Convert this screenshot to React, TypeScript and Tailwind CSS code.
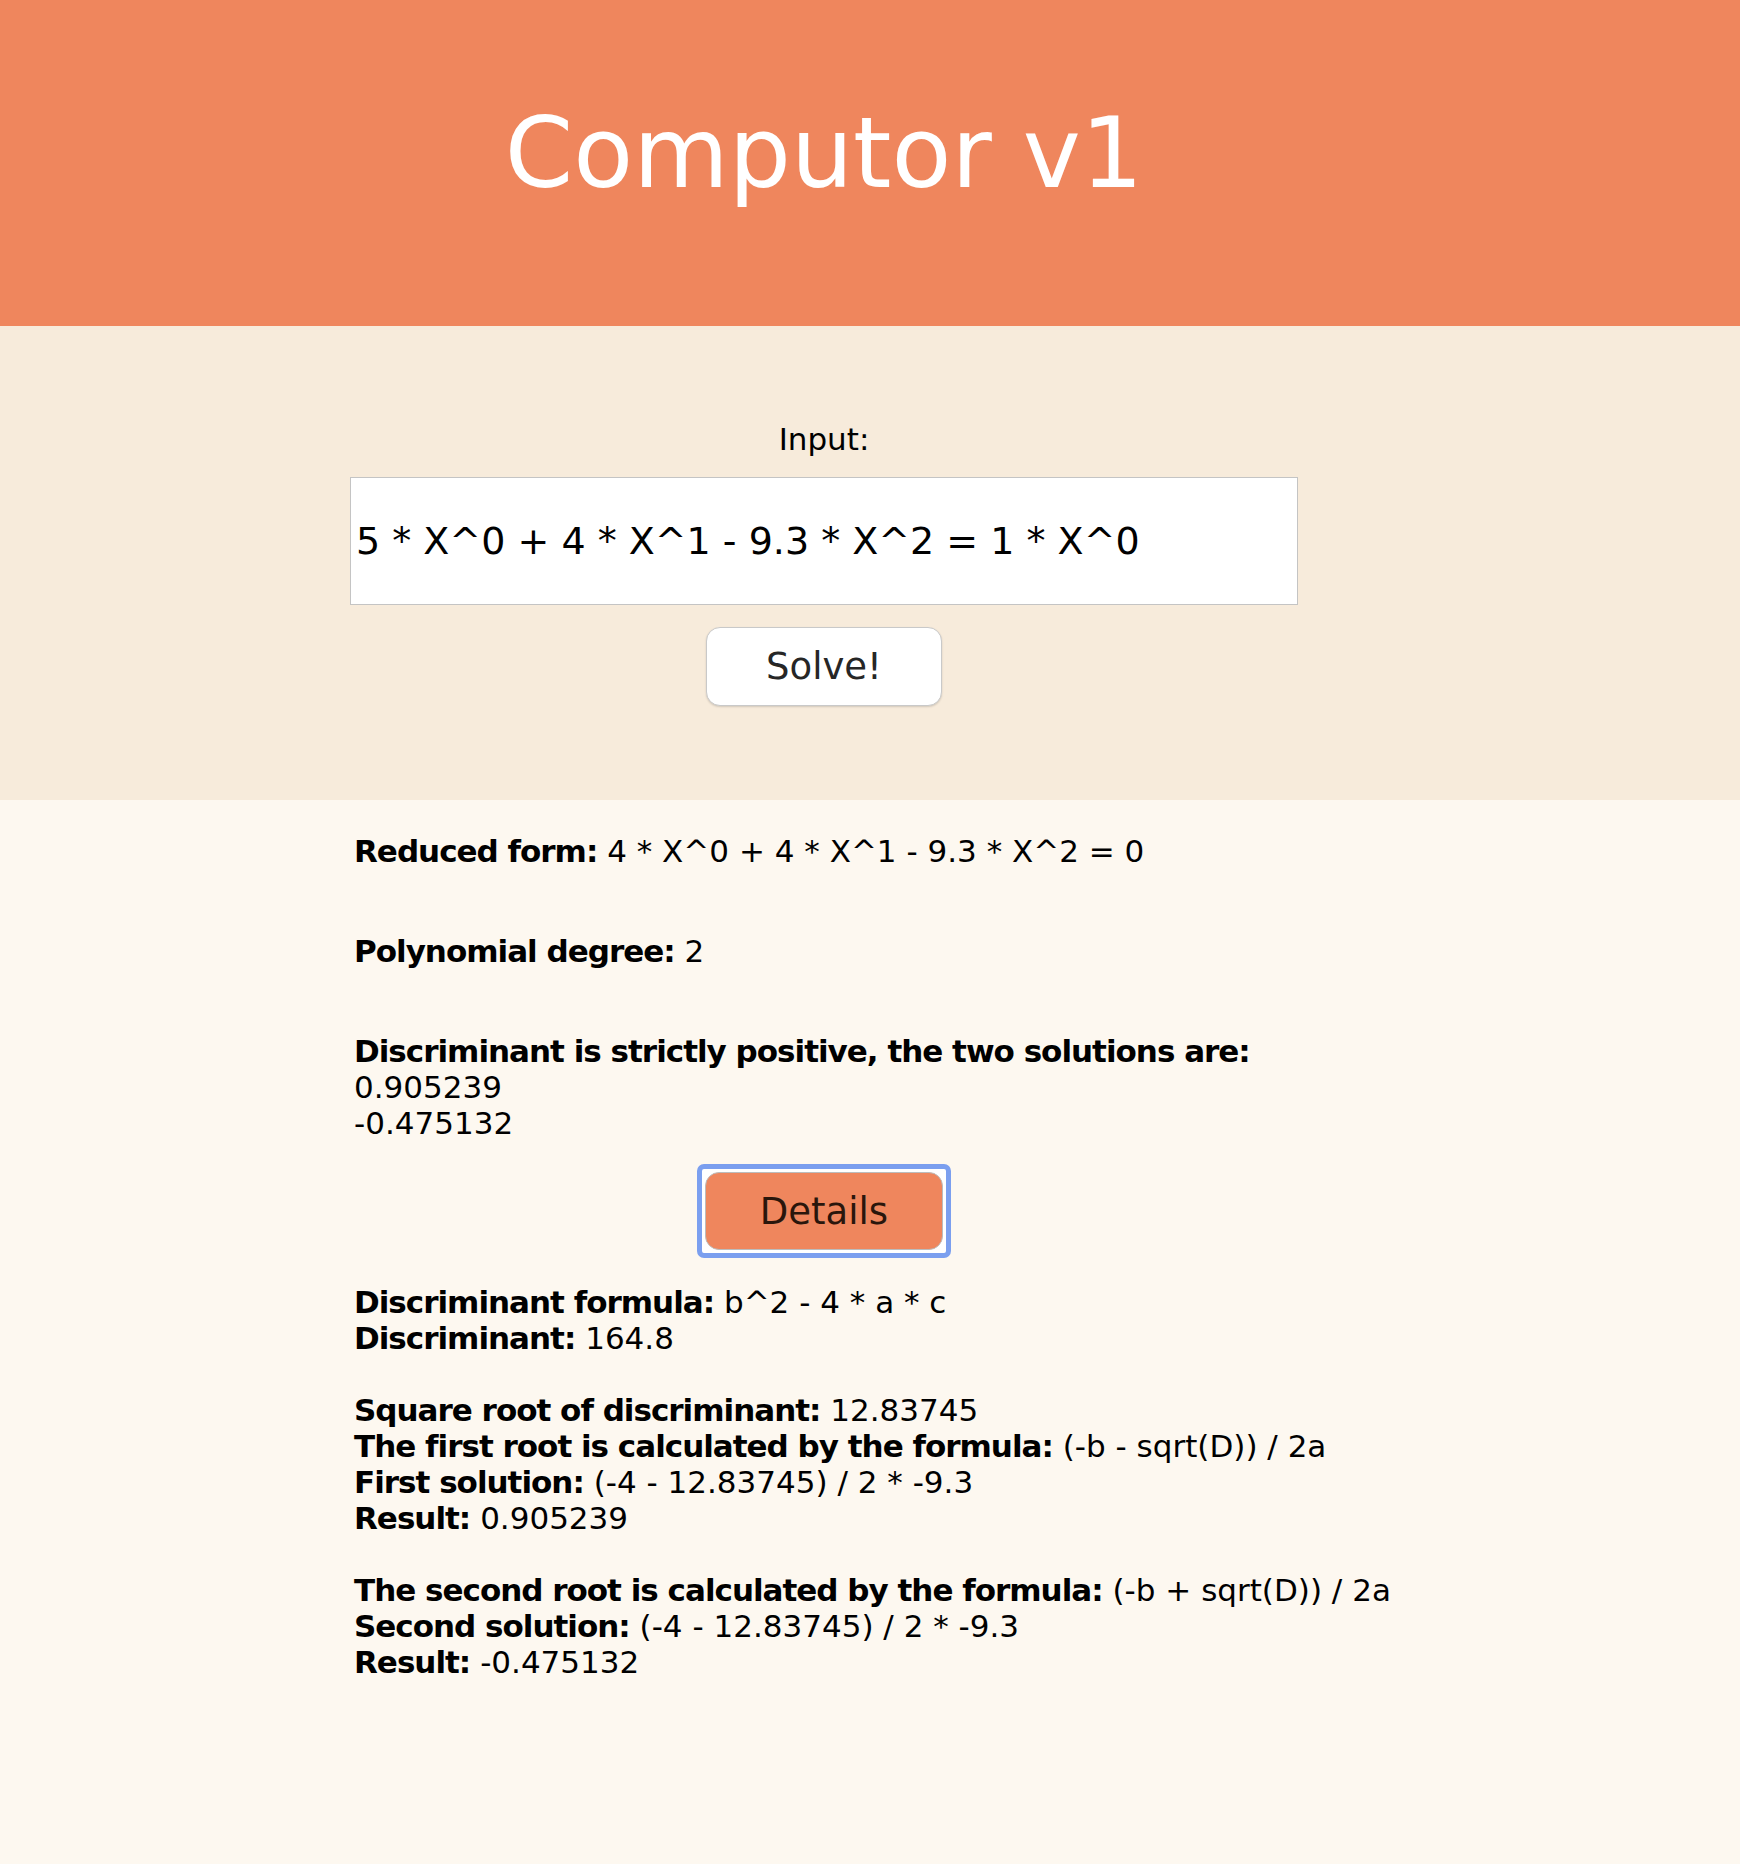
const FONT = "font-['Lucida_Grande','DejaVu_Sans',sans-serif]";

type Line = { label?: string; value?: string };

const SUMMARY: Line[][] = [
  [{ label: 'Reduced form:', value: '4 * X^0 + 4 * X^1 - 9.3 * X^2 = 0' }],
  [{ label: 'Polynomial degree:', value: '2' }],
  [
    { label: 'Discriminant is strictly positive, the two solutions are:' },
    { value: '0.905239' },
    { value: '-0.475132' },
  ],
];

const DETAILS: Line[] = [
  { label: 'Discriminant formula:', value: 'b^2 - 4 * a * c' },
  { label: 'Discriminant:', value: '164.8' },
  {},
  { label: 'Square root of discriminant:', value: '12.83745' },
  { label: 'The first root is calculated by the formula:', value: '(-b - sqrt(D)) / 2a' },
  { label: 'First solution:', value: '(-4 - 12.83745) / 2 * -9.3' },
  { label: 'Result:', value: '0.905239' },
  {},
  { label: 'The second root is calculated by the formula:', value: '(-b + sqrt(D)) / 2a' },
  { label: 'Second solution:', value: '(-4 - 12.83745) / 2 * -9.3' },
  { label: 'Result:', value: '-0.475132' },
];

function TextLine({ label, value }: Line) {
  return (
    <div className="h-[36px] whitespace-nowrap">
      {label && <b className="font-bold tracking-[-1px]">{label}</b>}
      {label && value ? ' ' : null}
      {value}
    </div>
  );
}

export default function App() {
  return (
    <div className={`min-h-screen bg-[#fdf8f0] text-[31px] leading-[36px] text-black ${FONT}`}>
      {/* header */}
      <header className="h-[326px] bg-[#ef865d]">
        <div className="flex w-[1648px] justify-center pt-[104px]">
          <h1 className="text-[98px] leading-none font-normal text-white">Computor v1</h1>
        </div>
      </header>

      {/* input form */}
      <section className="h-[474px] bg-[#f7ebdb]">
        <div className="flex w-[1648px] flex-col items-center pt-[95px]">
          <label htmlFor="eq" className="h-[36px]">Input:</label>
          <input
            id="eq"
            defaultValue="5 * X^0 + 4 * X^1 - 9.3 * X^2 = 1 * X^0"
            className={`mt-[20px] h-[128px] w-[948px] border border-[#c4c4c4] bg-white pl-[5px] text-[38px] text-black outline-none ${FONT}`}
          />
          <button className="mt-[22px] h-[79px] w-[236px] rounded-[14px] border border-[#c9c9c9] bg-white text-[37px] text-[#262626] shadow-[0_1px_2px_rgba(0,0,0,0.15)]">
            Solve!
          </button>
        </div>
      </section>

      {/* results */}
      <section>
        <div className="flex w-[1648px] flex-col items-center pt-[33px] pb-[150px]">
          <div className="flex w-[948px] flex-col gap-[64px] pl-[4px]">
            {SUMMARY.map((group, i) => (
              <div key={i}>
                {group.map((l, j) => (
                  <TextLine key={j} {...l} />
                ))}
              </div>
            ))}
          </div>

          <div className="mt-[23px] rounded-[7px] border-[5px] border-[#7b9fef] bg-white p-[3px]">
            <button className="block h-[78px] w-[238px] rounded-[14px] border border-[#bcbcbc] bg-[#ef865d] pt-[2px] text-[37px] text-[#2a160c]">
              Details
            </button>
          </div>

          <div className="mt-[26px] w-[948px] pl-[4px]">
            {DETAILS.map((l, i) => (
              <TextLine key={i} {...l} />
            ))}
          </div>
        </div>
      </section>
    </div>
  );
}
